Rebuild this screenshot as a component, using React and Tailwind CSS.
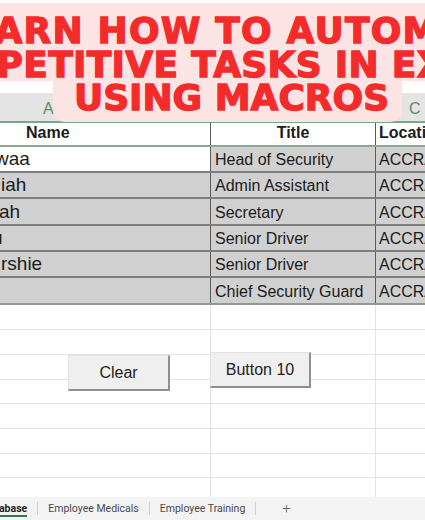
import React from "react";

const employees = [
  { name: "waa", shift: "-ml-[5px]", title: "Head of Security", first: true, h: "h-[26px]" },
  { name: "iah", shift: "ml-[1px]", title: "Admin Assistant", h: "h-[26px]" },
  { name: "ah", shift: "-ml-[1px]", title: "Secretary", h: "h-[27px]" },
  { name: "u", shift: "-ml-[8px]", title: "Senior Driver", h: "h-[26px]" },
  { name: "rshie", shift: "ml-[1px]", title: "Senior Driver", h: "h-[26px]" },
  { name: "", shift: "", title: "Chief Security Guard", h: "h-[27px]", last: true },
];

const gridRows = ["h-[25px]", "h-[25px]", "h-[25px]", "h-[24px]", "h-[25px]", "h-[25px]", "h-[24px]"];

function FormButton({ label, className }) {
  return (
    <div
      className={`absolute flex items-center justify-center bg-[#efefef] border-t border-l border-[#e2e2e2] border-r-2 border-b-2 border-r-[#8f8f8f] border-b-[#8f8f8f] text-[16px] text-[#222] ${className}`}
    >
      {label}
    </div>
  );
}

export default function App() {
  return (
    <div className="relative w-[425px] h-[520px] overflow-hidden bg-white font-['Liberation_Sans',Arial,sans-serif] text-[#1b1b1b]">
      {/* ribbon area, hidden under the banner */}
      <div className="h-[93px] bg-white" />

      {/* column letters */}
      <div className="flex h-[30px] bg-[#e4e4e4] border-b-2 border-[#7aa887] text-[16px] text-[#5f8b6d]">
        <div className="w-[211px] flex items-center pl-[43px] pt-[3px]">A</div>
        <div className="w-[165px] flex items-center justify-center pt-[3px]">B</div>
        <div className="flex-1 flex items-center pl-[33px] pt-[3px]">C</div>
      </div>

      {/* header row */}
      <div className="flex h-[24px] border-b-2 border-[#8ea598] text-[16px] font-bold leading-none">
        <div className="w-[211px] flex items-end pb-[4px] pl-[26px] border-r border-[#5a5a5a]">Name</div>
        <div className="w-[165px] flex items-end justify-center pb-[4px] border-r border-[#5a5a5a]">Title</div>
        <div className="flex-1 flex items-end pb-[4px] pl-[3px] whitespace-nowrap overflow-hidden">Location</div>
      </div>

      {/* data rows */}
      {employees.map((e, i) => (
        <div
          key={i}
          className={`flex ${e.h} border-b-2 ${e.last ? "border-[#8a9a91]" : "border-[#7d7d7d]"} leading-none`}
        >
          <div
            className={`w-[211px] flex items-end pb-[3px] overflow-hidden whitespace-nowrap border-r border-[#5a5a5a] text-[19px] ${
              e.first ? "bg-white" : "bg-[#d0d0d0]"
            }`}
          >
            <span className={e.shift}>{e.name}</span>
          </div>
          <div className="w-[165px] flex items-end pb-[3px] pl-[4px] bg-[#d0d0d0] border-r border-[#5a5a5a] text-[16px] whitespace-nowrap overflow-hidden">
            {e.title}
          </div>
          <div className="flex-1 flex items-end pb-[3px] pl-[3px] bg-[#d0d0d0] text-[16px] whitespace-nowrap overflow-hidden">
            ACCRA
          </div>
        </div>
      ))}

      {/* empty grid below the table */}
      <div className="relative h-[192px]">
        {gridRows.map((h, i) => (
          <div key={i} className={`flex ${h} border-b border-[#e3e3e3]`}>
            <div className="w-[211px] border-r border-[#e3e3e3]" />
            <div className="w-[165px] border-r border-[#e3e3e3]" />
            <div className="flex-1" />
          </div>
        ))}
        <div className="flex h-[19px]">
          <div className="w-[211px] border-r border-[#e3e3e3]" />
          <div className="w-[165px] border-r border-[#e3e3e3]" />
          <div className="flex-1" />
        </div>

        <FormButton label="Clear" className="left-[68px] top-[50px] w-[102px] h-[36px]" />
        <FormButton label="Button 10" className="left-[210px] top-[47px] w-[101px] h-[36px]" />
      </div>

      {/* sheet tabs */}
      <div className="flex items-center h-[23px] bg-[#f3f3f3] font-['Roboto',sans-serif] text-[10.5px] text-[#4a4a4a]">
        <div className="relative h-full flex items-center -ml-[17px] pr-[10px] font-bold text-[#1f1f1f]">
          Database
          <div className="absolute left-[17px] right-[10px] bottom-[3px] h-[2px] bg-[#2e7a4e]" />
        </div>
        <div className="w-px h-[13px] bg-[#cfcfcf]" />
        <div className="px-[10px]">Employee Medicals</div>
        <div className="w-px h-[13px] bg-[#cfcfcf]" />
        <div className="px-[10px]">Employee Training</div>
        <div className="w-px h-[13px] bg-[#cfcfcf]" />
        <div className="ml-[26px] text-[15px] font-light text-[#666]">+</div>
      </div>

      {/* title banner over the sheet */}
      <div className="absolute top-[3px] left-[-269px] w-[1000px] flex flex-col items-center font-['DejaVu_Sans',sans-serif] font-bold text-[36px] leading-[33.5px] text-[#f42b2b] [-webkit-text-stroke:1.3px_#f42b2b] whitespace-nowrap">
        <div className="bg-[#fde4e4] px-[60px] pt-[11px] rounded-t-[12px] tracking-[1.2px]">LEARN HOW TO AUTOMATE</div>
        <div className="bg-[#fde4e4] px-[50px] tracking-[0.3px]">REPETITIVE TASKS IN EXCEL</div>
        <div className="bg-[#fde4e4] pl-[21px] pr-[13px] -ml-[7px] pb-[7px] rounded-b-[12px]">USING MACROS</div>
      </div>
    </div>
  );
}
